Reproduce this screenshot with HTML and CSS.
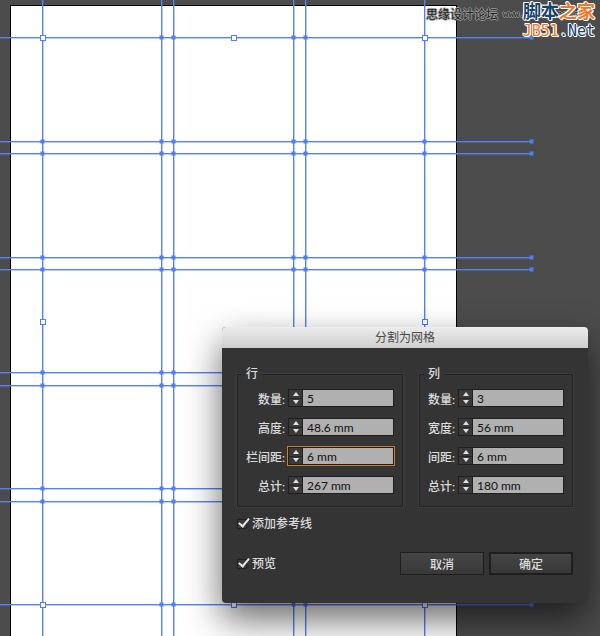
FILE: index.html
```
<!DOCTYPE html>
<html lang="zh-CN">
  <head>
    <meta charset="UTF-8" />
    <meta name="viewport" content="width=device-width, initial-scale=1" />
    <title>分割为网格</title>
    <link rel="stylesheet" href="styles.css">
  </head>
  <body>
    <main class="workspace">
      <svg class="artboard" width="600" height="640" aria-hidden="true">
        <rect x="10.5" y="5.5" width="446" height="700" fill="#fff" stroke="#000" />

        <!-- guides -->
        <g id="glow" class="glow"></g>
        <g id="guides" class="guides"></g>
        <g id="anchors" class="anchors"></g>
        <g id="handles" class="handles"></g>
      </svg>

      <div class="watermark">
        <span class="watermark-forum">思缘设计论坛</span>
        <span class="watermark-url">www.missyuan.com</span>
      </div>
      <div class="site-logo">
        <div class="site-name">脚本<span class="orange">之家</span></div>
        <div class="site-domain"><span class="orange">JB51</span>.Net</div>
      </div>

      <form class="dialog" id="gridForm">
        <h1 class="titlebar">分割为网格</h1>

        <div class="dialog-body">
          <div class="groups">
            <fieldset class="group">
              <legend>行</legend>
              <div class="field">
                <label for="rowCount">数量:</label>
                <div class="spinner">
                  <div class="stepper"><button type="button" class="up" aria-label="+"></button><button type="button" class="down" aria-label="-"></button></div>
                  <input type="text" id="rowCount" value="5" />
                </div>
              </div>
              <div class="field">
                <label for="rowHeight">高度:</label>
                <div class="spinner">
                  <div class="stepper"><button type="button" class="up" aria-label="+"></button><button type="button" class="down" aria-label="-"></button></div>
                  <input type="text" id="rowHeight" value="48.6 mm" />
                </div>
              </div>
              <div class="field">
                <label for="rowGutter">栏间距:</label>
                <div class="spinner active">
                  <div class="stepper"><button type="button" class="up" aria-label="+"></button><button type="button" class="down" aria-label="-"></button></div>
                  <input type="text" id="rowGutter" value="6 mm" />
                </div>
              </div>
              <div class="field">
                <label for="rowTotal">总计:</label>
                <div class="spinner">
                  <div class="stepper"><button type="button" class="up" aria-label="+"></button><button type="button" class="down" aria-label="-"></button></div>
                  <input type="text" id="rowTotal" value="267 mm" />
                </div>
              </div>
            </fieldset>

            <fieldset class="group">
              <legend>列</legend>
              <div class="field">
                <label for="colCount">数量:</label>
                <div class="spinner">
                  <div class="stepper"><button type="button" class="up" aria-label="+"></button><button type="button" class="down" aria-label="-"></button></div>
                  <input type="text" id="colCount" value="3" />
                </div>
              </div>
              <div class="field">
                <label for="colWidth">宽度:</label>
                <div class="spinner">
                  <div class="stepper"><button type="button" class="up" aria-label="+"></button><button type="button" class="down" aria-label="-"></button></div>
                  <input type="text" id="colWidth" value="56 mm" />
                </div>
              </div>
              <div class="field">
                <label for="colGutter">间距:</label>
                <div class="spinner">
                  <div class="stepper"><button type="button" class="up" aria-label="+"></button><button type="button" class="down" aria-label="-"></button></div>
                  <input type="text" id="colGutter" value="6 mm" />
                </div>
              </div>
              <div class="field">
                <label for="colTotal">总计:</label>
                <div class="spinner">
                  <div class="stepper"><button type="button" class="up" aria-label="+"></button><button type="button" class="down" aria-label="-"></button></div>
                  <input type="text" id="colTotal" value="180 mm" />
                </div>
              </div>
            </fieldset>
          </div>

          <label class="check"><input type="checkbox" id="addGuides" checked />添加参考线</label>

          <div class="footer">
            <label class="check"><input type="checkbox" id="preview" checked />预览</label>
            <div class="actions">
              <button type="button" class="btn">取消</button>
              <button type="submit" class="btn btn-primary">确定</button>
            </div>
          </div>
        </div>
      </form>
    </main>

    <script src="script.js"></script>
  </body>
</html>
```

FILE: script.js
```
const xs = [42, 161, 173, 293, 305, 424];
const ys = [37, 141, 153, 257, 269, 372, 385, 488, 501, 604];
const guideEnd = 531;

function add(parent, tag, attrs) {
  const el = document.createElementNS('http://www.w3.org/2000/svg', tag);
  Object.keys(attrs).forEach((key) => el.setAttribute(key, attrs[key]));
  document.getElementById(parent).appendChild(el);
}

xs.forEach((x) => {
  add('glow', 'rect', { x: x, y: 0, width: 2, height: 640 });
  add('guides', 'rect', { x: x, y: 0, width: 1, height: 640 });
});
ys.forEach((y) => {
  add('glow', 'rect', { x: 0, y: y, width: guideEnd, height: 2 });
  add('guides', 'rect', { x: 0, y: y, width: guideEnd, height: 1 });
});

ys.forEach((y) => {
  xs.concat(guideEnd).forEach((x) => {
    add('anchors', 'rect', { x: x - 1.5, y: y - 1.5, width: 4, height: 4 });
  });
});

// bounding box handles
[37, 321, 604].forEach((y) => {
  [42, 233, 424].forEach((x) => {
    if (y === 321 && x === 233) return;
    add('handles', 'rect', { x: x - 1.5, y: y - 1.5, width: 5, height: 5 });
  });
});

document.getElementById('gridForm').addEventListener('submit', (e) => {
  e.preventDefault();
});
```

FILE: styles.css
```
* {
  box-sizing: border-box;
  margin: 0;
  padding: 0;
}

body {
  font-family: Lato, "Noto Sans CJK SC", sans-serif;
  font-size: 12px;
  background-color: #4c4c4c;
  color: #dcdcdc;
}

.workspace {
  position: relative;
  min-height: 100vh;
  overflow: hidden;
}

.artboard {
  position: absolute;
  top: 0;
  left: 0;
}

.glow {
  fill: #5680f4;
  opacity: 0.4;
}

.guides {
  fill: #5680f4;
}

.anchors {
  fill: #4f7df5;
}

.handles {
  fill: #fff;
  stroke: #4f7df5;
}

/* watermarks */
.watermark {
  position: absolute;
  top: 7px;
  right: 10px;
  display: flex;
  gap: 5px;
  width: 164px;
  line-height: 16px;
  color: #1c1c1c;
  text-shadow: 1px 0 #9c9c9c, -1px 0 #9c9c9c, 0 1px #9c9c9c, 0 -1px #9c9c9c;
  white-space: nowrap;
}

.watermark-url {
  font-family: "Liberation Mono", monospace;
  font-size: 9px;
}

.site-logo {
  position: absolute;
  top: 1px;
  right: 5px;
  font-weight: 700;
  color: #17446e;
  text-align: right;
  text-shadow: 1px 0 #fff, -1px 0 #fff, 0 1px #fff, 0 -1px #fff, 1px 1px #fff, -1px -1px #fff;
}

.site-name {
  font-size: 18px;
  line-height: 20px;
}

.site-domain {
  font-family: "DejaVu Sans Mono", monospace;
  font-size: 15px;
  font-weight: 400;
  line-height: 20px;
}

.orange {
  color: #f0762c;
}

/* dialog */
.dialog {
  position: absolute;
  top: 327px;
  left: 222px;
  width: 366px;
  border-radius: 4px;
  background-color: #343434;
  box-shadow: 0 16px 36px rgba(0, 0, 0, 0.6);
}

.titlebar {
  height: 21px;
  border-radius: 4px 4px 0 0;
  background: linear-gradient(#ececec, #cfcfcf);
  color: #4a4a4a;
  font-size: 12px;
  font-weight: 400;
  line-height: 21px;
  text-align: center;
}

.dialog-body {
  padding: 18px 15px 28px;
}

.groups {
  display: grid;
  grid-template-columns: 166fr 154fr;
  gap: 16px;
  margin-bottom: 9px;
}

.group {
  display: flex;
  flex-direction: column;
  gap: 11px;
  min-width: 0;
  padding: 7px 8px 12px 4px;
  border: 1px solid #222;
  box-shadow: 0 0 0 1px #3d3d3d;
}

.group legend {
  padding: 0 4px;
  background-color: #343434;
  font-weight: 500;
  line-height: 16px;
}

.field {
  display: flex;
  align-items: center;
  justify-content: flex-end;
  gap: 3px;
  height: 18px;
  font-weight: 500;
  white-space: nowrap;
}

.spinner {
  display: flex;
  height: 18px;
  border: 1px solid #1f1f1f;
}

.spinner.active {
  outline: 1px solid #d07a30;
}

.stepper {
  display: flex;
  flex-direction: column;
  width: 14px;
  border-right: 1px solid #1f1f1f;
}

.stepper button {
  display: flex;
  flex: 1;
  align-items: center;
  justify-content: center;
  border: none;
  background-color: #3a3a3a;
}

.stepper .up {
  border-bottom: 1px solid #262626;
}

.stepper button::before {
  content: "";
  border: 3px solid transparent;
}

.stepper .up::before {
  border-top: none;
  border-bottom: 4px solid #e2e2e2;
}

.stepper .down::before {
  border-top: 4px solid #e2e2e2;
  border-bottom: none;
}

.spinner input {
  width: 90px;
  padding: 0 4px;
  border: none;
  outline: none;
  background-color: #b0b0b0;
  color: #111;
  font-family: Lato, sans-serif;
  font-size: 12px;
}

.check {
  display: flex;
  align-items: center;
  gap: 5px;
  font-weight: 500;
  line-height: 16px;
}

.check input {
  position: relative;
  width: 10px;
  height: 10px;
  appearance: none;
  border: 1px solid #202020;
  background-color: #3a3a3a;
}

.check input:checked::after {
  content: "";
  position: absolute;
  top: -4px;
  left: 3px;
  width: 4px;
  height: 9px;
  border: solid #e8e8e8;
  border-width: 0 2px 2px 0;
  transform: rotate(40deg);
}

.footer {
  display: flex;
  align-items: center;
  justify-content: space-between;
  margin-top: 20px;
}

.actions {
  display: flex;
  gap: 5px;
}

.btn {
  width: 84px;
  height: 23px;
  border: 1px solid #1e1e1e;
  background: linear-gradient(#454545, #383838);
  color: #dcdcdc;
  font-family: inherit;
  font-size: 12px;
  font-weight: 500;
}

.btn-primary {
  border-width: 2px;
}
```
